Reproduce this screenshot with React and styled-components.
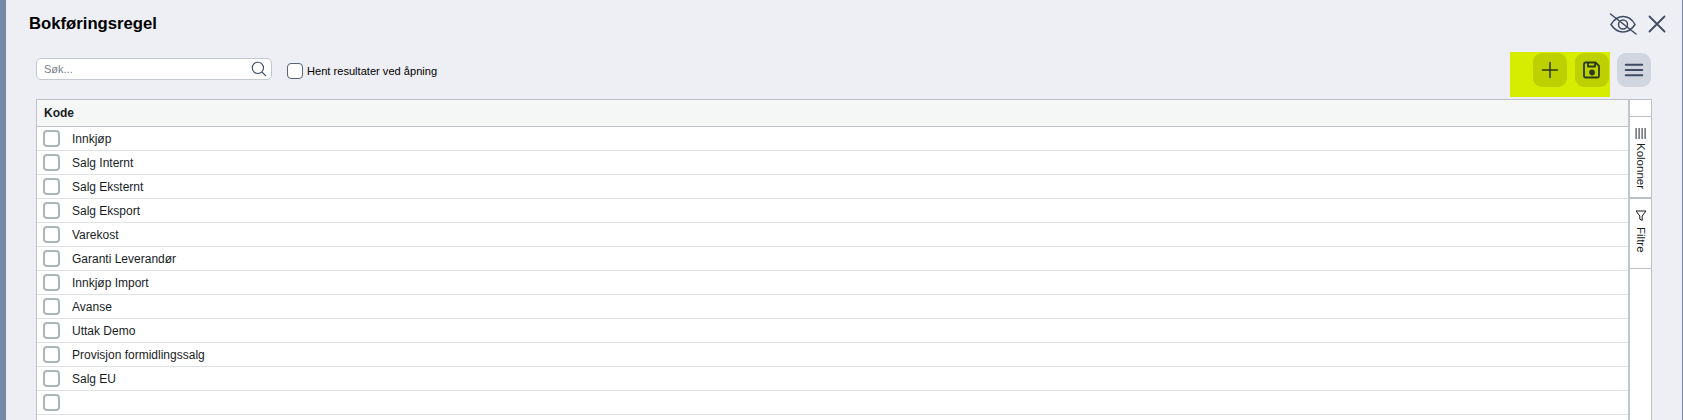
import styled, { createGlobalStyle } from 'styled-components';
import { HiOutlinePlus, HiOutlineBars3, HiOutlineMagnifyingGlass } from 'react-icons/hi2';

const GlobalStyle = createGlobalStyle`
  html, body {
    margin: 0;
    height: 420px;
    overflow: hidden;
    background: #7488a8;
    font-family: "Liberation Sans", Arial, sans-serif;
  }
`;

const Backdrop = styled.div`
  height: 420px;
  padding: 0 1px 0 6px;
  box-sizing: border-box;
  overflow: hidden;
`;

const Panel = styled.div`
  height: 420px;
  background: #eeeff4;
  padding: 0 30px 0 30px;
  box-sizing: border-box;
  display: flex;
  flex-direction: column;
`;

const TitleBar = styled.div`
  height: 52px;
  display: flex;
  align-items: center;
  justify-content: space-between;
  margin: 0 -14px 0 -7px;
  padding-bottom: 5px;
  box-sizing: border-box;
`;

const Title = styled.h1`
  margin: 0;
  font-size: 16.7px;
  font-weight: 700;
  color: #000;
`;

const WindowActions = styled.div`
  display: flex;
  align-items: center;
  gap: 11px;
  color: #3f4c63;
`;

const Toolbar = styled.div`
  height: 47px;
  display: flex;
  align-items: flex-start;
`;

const SearchBox = styled.div`
  width: 236px;
  height: 22px;
  margin-top: 6px;
  box-sizing: border-box;
  background: #fff;
  border: 1px solid #c4c8cf;
  border-radius: 5px;
  display: flex;
  align-items: center;
  justify-content: space-between;
  padding: 0 3px 0 7px;
  font-size: 11px;
  color: #7a7f87;
  svg { font-size: 18px; color: #3f4c63; }
`;

const Check = styled.span`
  display: block;
  flex: none;
  box-sizing: border-box;
  width: ${p => p.$dark ? '16px' : '17px'};
  height: ${p => p.$dark ? '16px' : '17px'};
  background: #fff;
  border: ${p => p.$dark ? '1px solid #5b6470' : '2px solid #aab6b7'};
  border-radius: 4px;
`;

const FetchOption = styled.label`
  display: flex;
  align-items: center;
  gap: 4px;
  margin: 11px 0 0 15px;
  font-size: 11.1px;
  color: #000;
`;

const Actions = styled.div`
  margin: 0 1px 0 auto;
  display: flex;
  align-items: flex-start;
  gap: 7px;
`;

const Highlight = styled.div`
  display: flex;
  gap: 8px;
  height: 45px;
  padding: 1px 1px 0 23px;
  box-sizing: border-box;
  background: #d6ec00;
`;

const IconButton = styled.button`
  width: 34px;
  height: 34px;
  margin-top: ${p => p.$plain ? '1px' : '0'};
  padding: 0;
  border: 0;
  border-radius: 9px;
  background: ${p => p.$plain ? '#d0d5df' : '#bdd000'};
  color: ${p => p.$plain ? '#3f4c63' : '#2c3a1d'};
  display: flex;
  align-items: center;
  justify-content: center;
  font-size: 24px;
`;

const Grid = styled.div`
  flex: 1;
  display: flex;
  background: #fff;
  border: 1px solid #bdc1c6;
  border-bottom: 0;
  min-height: 0;
`;

const Rows = styled.div`
  flex: 1;
  min-width: 0;
`;

const HeaderRow = styled.div`
  height: 26px;
  background: #f5f7f7;
  border-bottom: 1px solid #bdc1c6;
  display: flex;
  align-items: center;
  padding-left: 7px;
  font-size: 12px;
  font-weight: 700;
  color: #181d1f;
`;

const Row = styled.div`
  height: 24px;
  box-sizing: border-box;
  border-bottom: 1px solid #dde2e2;
  display: flex;
  align-items: center;
  gap: 12px;
  padding-left: 6px;
  font-size: 12px;
  color: #181d1f;
`;

const SideBar = styled.div`
  width: 21px;
  flex: none;
  border-left: 2px solid #bfc6cc;
  display: flex;
  flex-direction: column;
  padding-top: 16px;
`;

const SideTab = styled.div`
  height: ${p => p.$h}px;
  box-sizing: border-box;
  border-top: ${p => p.$thick ? '2px' : '1px'} solid #bdc1c6;
  display: flex;
  align-items: center;
  padding-top: 11px;
  gap: ${p => p.$gap}px;
  font-size: 11.5px;
  color: #181d1f;
  writing-mode: vertical-rl;
  svg { flex: none; }
`;

const SideIcon = styled.svg`
  transform: rotate(${p => p.$turn}deg);
`;

const rows = [
  'Innkjøp', 'Salg Internt', 'Salg Eksternt', 'Salg Eksport', 'Varekost', 'Garanti Leverandør',
  'Innkjøp Import', 'Avanse', 'Uttak Demo', 'Provisjon formidlingssalg', 'Salg EU', '',
];

const App = () => {
  return (
    <Backdrop>
      <GlobalStyle />
      <Panel>
        <TitleBar>
          <Title>Bokføringsregel</Title>
          <WindowActions>
            <svg width="28" height="22" viewBox="0 0 28 22" fill="none" stroke="currentColor" strokeWidth="1.5" strokeLinecap="round">
              <path d="M2 11.5C6 5 10.5 3.5 14 3.5s8.500 1.500 12 8c-3.500 5.500-8 7.500-12 7.500S5.500 17 2 11.500z" />
              <circle cx="14" cy="11.500" r="4.500" />
              <path d="M1.500 1 27 21" />
            </svg>
            <svg width="18" height="18" viewBox="0 0 18 18" fill="none" stroke="currentColor" strokeWidth="1.8" strokeLinecap="round">
              <path d="M1.500 1.500l15 15M16.500 1.500l-15 15" />
            </svg>
          </WindowActions>
        </TitleBar>
        <Toolbar>
          <SearchBox>
            Søk...
            <HiOutlineMagnifyingGlass />
          </SearchBox>
          <FetchOption>
            <Check $dark />
            Hent resultater ved åpning
          </FetchOption>
          <Actions>
            <Highlight>
              <IconButton>
                <HiOutlinePlus />
              </IconButton>
              <IconButton>
                <svg width="20" height="20" viewBox="0 0 20 20" fill="none" stroke="currentColor" strokeWidth="1.8" strokeLinejoin="round">
                  <path d="M3.500 2.500h10l3.500 3.500v10a1.500 1.500 0 0 1-1.500 1.500h-12A1.500 1.500 0 0 1 2 16V4a1.500 1.500 0 0 1 1.500-1.500z" />
                  <path d="M6 2.500v4h7v-4" />
                  <circle cx="10" cy="12.500" r="2" fill="currentColor" />
                </svg>
              </IconButton>
            </Highlight>
            <IconButton $plain>
              <HiOutlineBars3 strokeWidth={2} />
            </IconButton>
          </Actions>
        </Toolbar>
        <Grid>
          <Rows>
            <HeaderRow>Kode</HeaderRow>
            {rows.map((name, i) => (
              <Row key={i}>
                <Check />
                {name}
              </Row>
            ))}
          </Rows>
          <SideBar>
            <SideTab $h={81} $gap={4}>
              <SideIcon $turn={90} width="11" height="11" viewBox="0 0 11 11" fill="#7b8085">
                <path d="M0 0h11v1.700H0zM0 3h11v1.700H0zM0 6h11v1.700H0zM0 9h11v1.700H0z" />
              </SideIcon>
              Kolonner
            </SideTab>
            <SideTab $h={71} $gap={5} $thick>
              <SideIcon $turn={0} width="12" height="12" viewBox="0 0 12 12" fill="none" stroke="#181d1f" strokeWidth="1">
                <path d="M1 1h10L7.200 6v4.500L4.800 9V6z" />
              </SideIcon>
              Filtre
            </SideTab>
            <SideTab $h={1} />
          </SideBar>
        </Grid>
      </Panel>
    </Backdrop>
  );
};

export default App;
